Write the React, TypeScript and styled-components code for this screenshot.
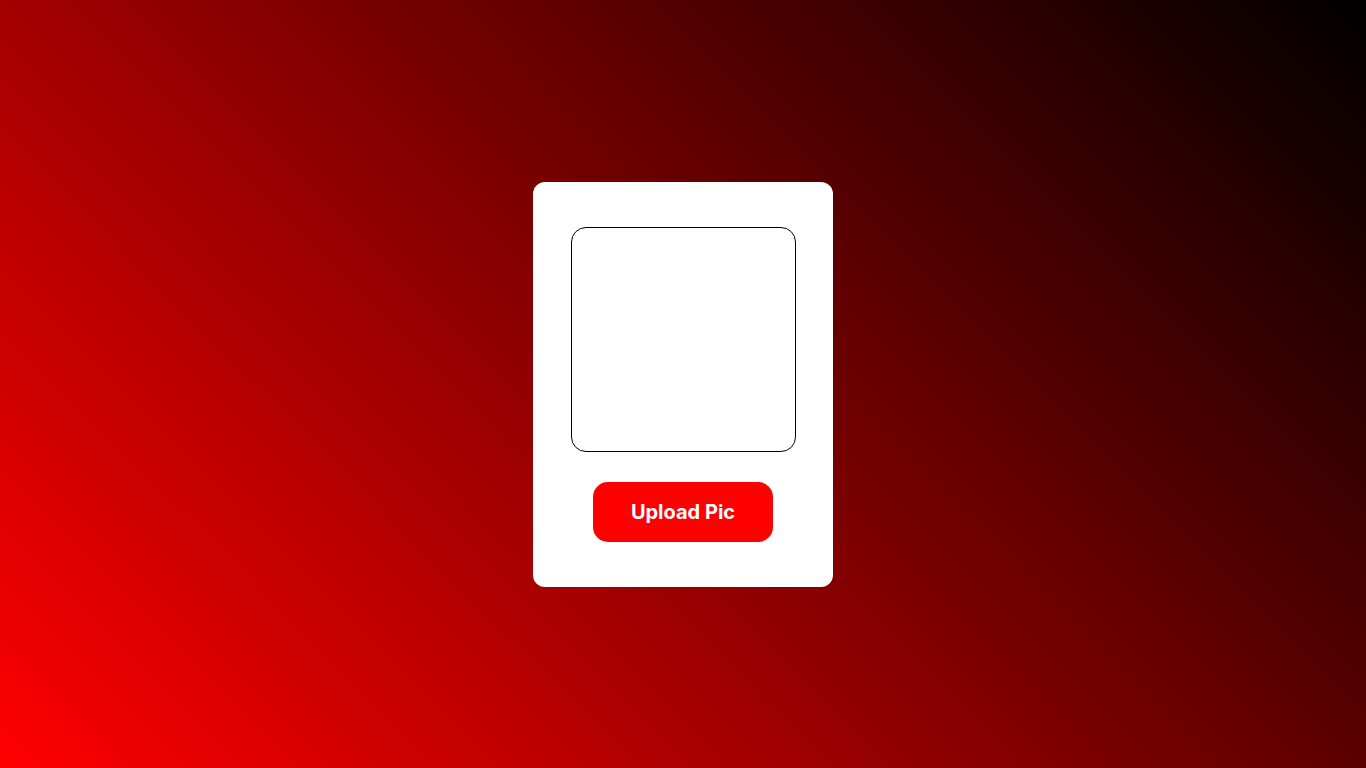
import React from 'react'
import styled, { createGlobalStyle } from 'styled-components'

const GlobalStyle = createGlobalStyle`
  * {
    box-sizing: border-box;
  }
  html,
  body {
    margin: 0;
    padding: 0;
    height: 100%;
  }
  body {
    font-family: 'Inter', 'Liberation Sans', sans-serif;
  }
  #root {
    height: 100%;
  }
`

const Page = styled.main`
  min-height: 100vh;
  display: flex;
  align-items: center;
  justify-content: center;
  background: linear-gradient(45deg, #ff0000, #000000);
`

const Card = styled.section`
  width: 300px;
  padding: 45px 0;
  background: #ffffff;
  border-radius: 12px;
  display: flex;
  flex-direction: column;
  align-items: center;
  gap: 30px;
`

const Preview = styled.div`
  width: 225px;
  height: 225px;
  border: 1px solid #000000;
  border-radius: 15px;
  background: #ffffff;
`

const UploadButton = styled.button`
  width: 180px;
  height: 60px;
  border: none;
  border-radius: 15px;
  background: #ff0000;
  color: #ffffff;
  font-family: 'Inter', 'Liberation Sans', sans-serif;
  font-size: 20px;
  font-weight: 700;
  cursor: pointer;
`

const App: React.FC = () => {
  return (
    <>
      <GlobalStyle />
      <Page>
        <Card>
          <Preview />
          <UploadButton>Upload Pic</UploadButton>
        </Card>
      </Page>
    </>
  )
}

export default App
